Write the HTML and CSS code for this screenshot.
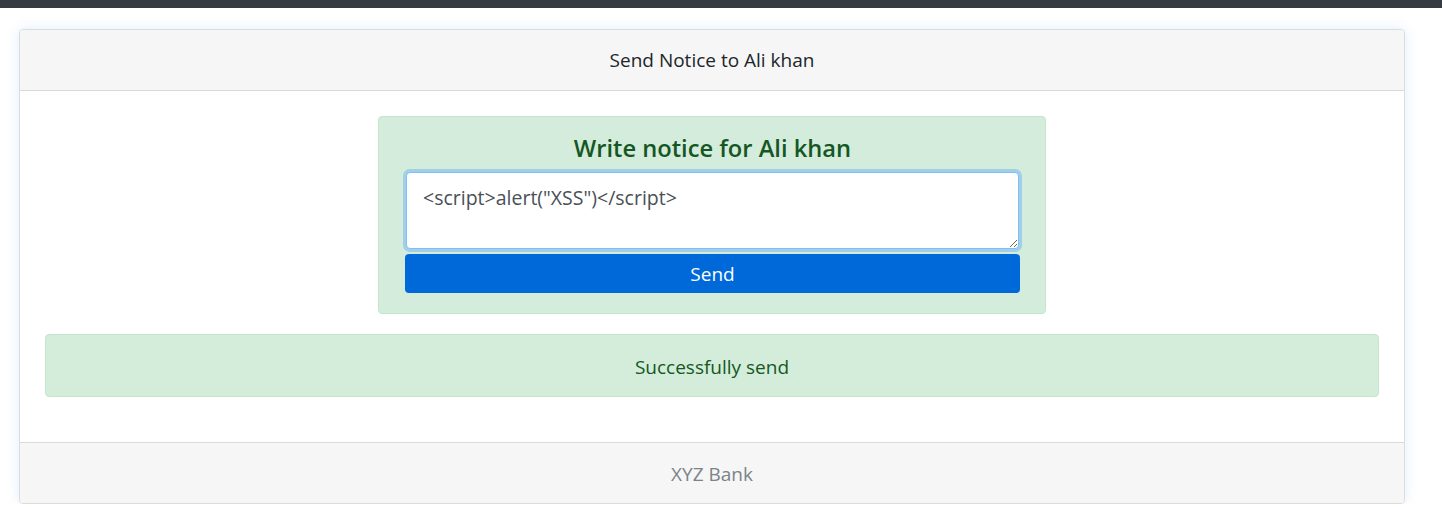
FILE: index.html
```html
<!DOCTYPE html>
<html>
<head>
<meta charset="utf-8">
<link rel="stylesheet" href="styles.css">
</head>
<body>
<div class="topbar"></div>
<div class="page">
  <div class="card">
    <div class="card-header">Send Notice to Ali khan</div>
    <div class="card-body">
      <form class="notice-box">
        <h3 class="notice-title">Write notice for Ali khan</h3>
        <textarea class="notice-input">&lt;script&gt;alert("XSS")&lt;/script&gt;</textarea>
        <button type="button" class="send-btn">Send</button>
      </form>
      <div class="alert">Successfully send</div>
    </div>
    <div class="card-footer">XYZ Bank</div>
  </div>
</div>
</body>
</html>
```

FILE: styles.css
```css
* { box-sizing: border-box; }
html, body { margin: 0; padding: 0; background: #fff; }
body {
  font-family: "Open Sans", "Noto Sans", sans-serif;
  font-size: 19px;
  color: #212529;
}
.topbar { height: 8px; background: #363a43; }
.page { padding: 21px 37px 0 19px; }
.card {
  border: 1px solid #dcdcdc;
  border-radius: 4px;
  box-shadow: 0 0 14px rgba(0, 110, 255, 0.12);
  background: #fff;
  overflow: hidden;
}
.card-header {
  height: 61px;
  display: flex;
  align-items: center;
  justify-content: center;
  background: #f6f6f6;
  border-bottom: 1px solid #d9d9d9;
  font-size: 19px;
  color: #212529;
}
.card-body { padding: 25px 25px 45px 25px; display: flex; flex-direction: column; align-items: center; }
.notice-box {
  width: 668px;
  background: #d4ecdb;
  border: 1px solid #c3e6cb;
  border-radius: 4px;
  padding: 15px 25px 20px 26px;
  display: flex;
  flex-direction: column;
  margin: 0;
}
.notice-title {
  margin: 0 0 8px 0;
  text-align: center;
  font-size: 23.7px;
  font-weight: 600;
  color: #155724;
  line-height: 32px;
}
.notice-input {
  height: 77px;
  resize: vertical;
  border: 1px solid #80bdff;
  border-radius: 4px;
  box-shadow: 0 0 0 3px rgba(0, 123, 255, 0.25);
  padding: 11px 16px 9px;
  font-family: inherit;
  font-size: 19.5px;
  color: #495057;
  outline: none;
  margin: 0 1px;
}
.send-btn {
  margin-top: 5px;
  height: 39px;
  background: #0069d9;
  border: none;
  border-radius: 4px;
  color: #fff;
  font-family: inherit;
  font-size: 19px;
}
.alert {
  margin-top: 20px;
  width: 100%;
  height: 63px;
  padding-top: 3px;
  display: flex;
  align-items: center;
  justify-content: center;
  background: #d4edda;
  border: 1px solid #c3e6cb;
  border-radius: 4px;
  color: #155724;
  font-size: 19px;
}
.card-footer {
  height: 61px;
  padding-top: 2px;
  display: flex;
  align-items: center;
  justify-content: center;
  background: #f6f6f6;
  border-top: 1px solid #d9d9d9;
  color: #7b8389;
  font-size: 19px;
}
```
